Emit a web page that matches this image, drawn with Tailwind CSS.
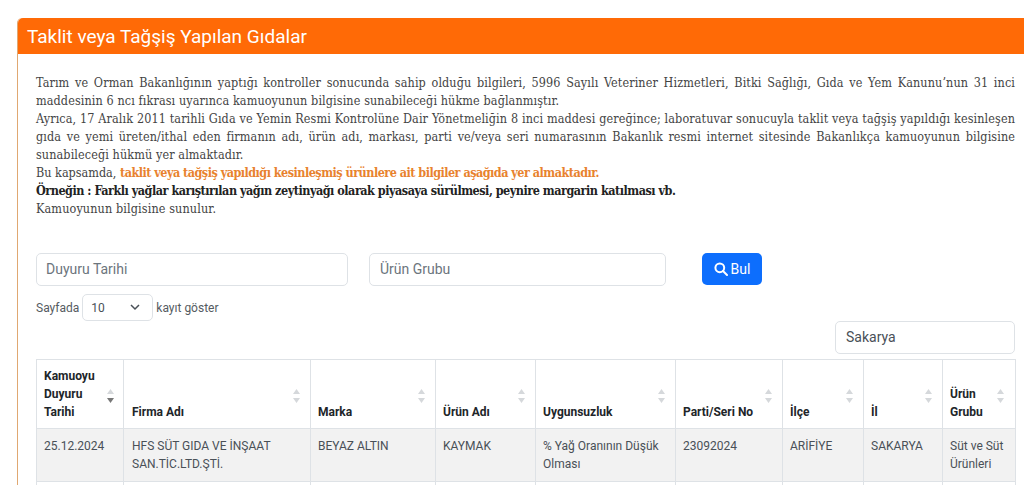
<!DOCTYPE html>
<html lang="tr" class="overflow-hidden">
<head>
  <meta charset="UTF-8" />
  <title>Taklit veya Tağşiş Yapılan Gıdalar</title>
  <script src="https://cdn.jsdelivr.net/npm/@tailwindcss/browser@4"></script>
</head>
<body class="bg-white overflow-hidden h-[485px] font-['Roboto',sans-serif] text-[#212529]">

  <div class="ml-[17px] mt-[18px] w-[1030px] border-l border-[#e0a872] rounded-t-[5px]">
    <div class="h-9 bg-[#ff6a06] rounded-t-[5px] pl-[9px] flex items-center text-white text-[19px] leading-none">Taklit veya Tağşiş Yapılan Gıdalar</div>

    <div class="pl-[18px] w-[997px]">
      <div class="pt-[20px] text-[12.5px] leading-[18px] text-[#444] font-['DejaVu_Serif_Condensed','DejaVu_Serif',serif] h-[199px]">
        <p class="text-justify tracking-[0.1px]">Tarım ve Orman Bakanlığının yaptığı kontroller sonucunda sahip olduğu bilgileri, 5996 Sayılı Veteriner Hizmetleri, Bitki Sağlığı, Gıda ve Yem Kanunu’nun 31 inci maddesinin 6 ncı fıkrası uyarınca kamuoyunun bilgisine sunabileceği hükme bağlanmıştır.</p>
        <p class="text-justify tracking-[0.1px]">Ayrıca, 17 Aralık 2011 tarihli Gıda ve Yemin Resmi Kontrolüne Dair Yönetmeliğin 8 inci maddesi gereğince; laboratuvar sonucuyla taklit veya tağşiş yapıldığı kesinleşen gıda ve yemi üreten/ithal eden firmanın adı, ürün adı, markası, parti ve/veya seri numarasının Bakanlık resmi internet sitesinde Bakanlıkça kamuoyunun bilgisine sunabileceği hükmü yer almaktadır.</p>
        <p>Bu kapsamda, <b class="text-[#e8822e] tracking-[-0.52px]">taklit veya tağşiş yapıldığı kesinleşmiş ürünlere ait bilgiler aşağıda yer almaktadır.</b></p>
        <p class="font-bold text-[#222] tracking-[-0.49px]">Örneğin : Farklı yağlar karıştırılan yağın zeytinyağı olarak piyasaya sürülmesi, peynire margarin katılması vb.</p>
        <p class="tracking-[0.12px]">Kamuoyunun bilgisine sunulur.</p>
      </div>

      <div class="flex items-start text-[14px] text-[#6c757d]">
        <div class="w-[312px] h-[33px] border border-[#dee2e6] rounded-[5px] px-[9px] flex items-center">Duyuru Tarihi</div>
        <div class="ml-[21px] w-[297px] h-[33px] border border-[#dee2e6] rounded-[5px] px-[10px] flex items-center">Ürün Grubu</div>
        <button class="ml-[36px] w-[60px] h-[32px] bg-[#0d6efd] rounded-[5px] text-white flex items-center justify-center gap-[3px]">
          <svg width="14" height="14" viewBox="0 0 14 14" fill="none" stroke="white" stroke-width="2"><circle cx="5.8" cy="5.8" r="4.4"/><path d="M9 9l4 4" stroke-linecap="round"/></svg>
          Bul
        </button>
      </div>

      <div class="mt-2 flex items-center text-[12px] text-[#555b61] h-[27px]">
        Sayfada
        <div class="ml-[3px] w-[71px] h-[27px] border border-[#dee2e6] rounded-[5px] pl-[8px] pr-[12px] flex items-center justify-between text-[#495057]">
          10
          <svg width="10" height="7" viewBox="0 0 10 7" fill="none" stroke="#495057" stroke-width="1.5"><path d="M1 1l4 4 4-4"/></svg>
        </div>
        <span class="ml-[3px]">kayıt göster</span>
      </div>

      <div class="flex justify-end">
        <div class="w-[180px] h-[33px] border border-[#dee2e6] rounded-[5px] px-[10px] flex items-center text-[14px] text-[#495057]">Sakarya</div>
      </div>

      <table class="mt-[5px] w-[979px] table-fixed border-collapse text-[12px] leading-[18px]">
        <colgroup>
          <col class="w-[87px]"><col class="w-[187px]"><col class="w-[125px]"><col class="w-[100px]"><col class="w-[140px]"><col class="w-[107px]"><col class="w-[81px]"><col class="w-[79px]"><col class="w-[73px]">
        </colgroup>
        <thead>
          <tr class="h-[69px] font-bold text-[#212529]">
            <th class="border border-[#dee2e6] pl-[7px] pr-[20px] pb-[7px] align-bottom text-left font-bold relative">Kamuoyu Duyuru Tarihi<svg class="absolute right-[9px] top-[29px]" width="7" height="14" viewBox="0 0 7 14"><path d="M3.5 0L7 5H0z" fill="#d5d8db"/><path d="M3.5 14L0 9h7z" fill="#777"/></svg></th>
            <th class="border border-[#dee2e6] pl-[8px] pb-[7px] align-bottom text-left font-bold relative">Firma Adı<svg class="absolute right-[10px] top-[29px]" width="7" height="14" viewBox="0 0 7 14"><path d="M3.5 0L7 5H0zM3.5 14L0 9h7z" fill="#d5d8db"/></svg></th>
            <th class="border border-[#dee2e6] px-[7px] pb-[7px] align-bottom text-left font-bold relative">Marka<svg class="absolute right-[10px] top-[29px]" width="7" height="14" viewBox="0 0 7 14"><path d="M3.5 0L7 5H0zM3.5 14L0 9h7z" fill="#d5d8db"/></svg></th>
            <th class="border border-[#dee2e6] px-[7px] pb-[7px] align-bottom text-left font-bold relative">Ürün Adı<svg class="absolute right-[10px] top-[29px]" width="7" height="14" viewBox="0 0 7 14"><path d="M3.5 0L7 5H0zM3.5 14L0 9h7z" fill="#d5d8db"/></svg></th>
            <th class="border border-[#dee2e6] px-[7px] pb-[7px] align-bottom text-left font-bold relative">Uygunsuzluk<svg class="absolute right-[10px] top-[29px]" width="7" height="14" viewBox="0 0 7 14"><path d="M3.5 0L7 5H0zM3.5 14L0 9h7z" fill="#d5d8db"/></svg></th>
            <th class="border border-[#dee2e6] px-[7px] pb-[7px] align-bottom text-left font-bold relative">Parti/Seri No<svg class="absolute right-[10px] top-[29px]" width="7" height="14" viewBox="0 0 7 14"><path d="M3.5 0L7 5H0zM3.5 14L0 9h7z" fill="#d5d8db"/></svg></th>
            <th class="border border-[#dee2e6] px-[7px] pb-[7px] align-bottom text-left font-bold relative">İlçe<svg class="absolute right-[10px] top-[29px]" width="7" height="14" viewBox="0 0 7 14"><path d="M3.5 0L7 5H0zM3.5 14L0 9h7z" fill="#d5d8db"/></svg></th>
            <th class="border border-[#dee2e6] px-[7px] pb-[7px] align-bottom text-left font-bold relative">İl<svg class="absolute right-[10px] top-[29px]" width="7" height="14" viewBox="0 0 7 14"><path d="M3.5 0L7 5H0zM3.5 14L0 9h7z" fill="#d5d8db"/></svg></th>
            <th class="border border-[#dee2e6] pl-[7px] pr-[20px] pb-[7px] align-bottom text-left font-bold relative">Ürün Grubu<svg class="absolute right-[11px] top-[29px]" width="7" height="14" viewBox="0 0 7 14"><path d="M3.5 0L7 5H0zM3.5 14L0 9h7z" fill="#d5d8db"/></svg></th>
          </tr>
        </thead>
        <tbody class="text-[#495057]">
          <tr class="h-[53px] bg-[#f2f2f2] align-top">
            <td class="border border-[#dee2e6] px-[7px] py-[8px]">25.12.2024</td>
            <td class="border border-[#dee2e6] pl-[8px] pr-[7px] py-[8px]">HFS SÜT GIDA VE İNŞAAT SAN.TİC.LTD.ŞTİ.</td>
            <td class="border border-[#dee2e6] px-[7px] py-[8px]">BEYAZ ALTIN</td>
            <td class="border border-[#dee2e6] px-[7px] py-[8px]">KAYMAK</td>
            <td class="border border-[#dee2e6] px-[7px] py-[8px]">% Yağ Oranının Düşük Olması</td>
            <td class="border border-[#dee2e6] px-[7px] py-[8px]">23092024</td>
            <td class="border border-[#dee2e6] px-[7px] py-[8px]">ARİFİYE</td>
            <td class="border border-[#dee2e6] px-[7px] py-[8px]">SAKARYA</td>
            <td class="border border-[#dee2e6] px-[7px] py-[8px]">Süt ve Süt Ürünleri</td>
          </tr>
          <tr class="h-[53px]">
            <td class="border border-[#dee2e6]"></td><td class="border border-[#dee2e6]"></td><td class="border border-[#dee2e6]"></td><td class="border border-[#dee2e6]"></td><td class="border border-[#dee2e6]"></td><td class="border border-[#dee2e6]"></td><td class="border border-[#dee2e6]"></td><td class="border border-[#dee2e6]"></td><td class="border border-[#dee2e6]"></td>
          </tr>
        </tbody>
      </table>
    </div>
  </div>

</body>
</html>
